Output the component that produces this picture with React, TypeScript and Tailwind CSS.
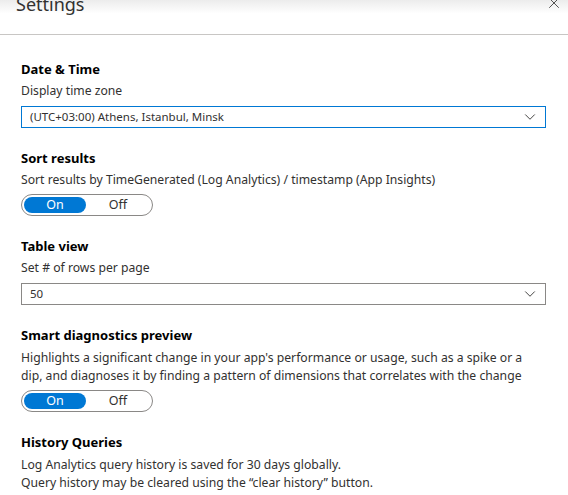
import { X, ChevronDown } from 'lucide-react'

function Toggle({ on = true }: { on?: boolean }) {
  return (
    <div className="mt-[5px] flex h-[22px] w-[132px] items-center rounded-full border border-[#8a8886] p-[2px] text-[12.5px]">
      <span
        className={
          on
            ? 'flex h-[16px] w-[62px] items-center justify-center rounded-full bg-[#0078d4] text-white'
            : 'flex h-[16px] w-[62px] items-center justify-center text-[#323130]'
        }
      >
        On
      </span>
      <span className="flex h-[16px] flex-1 items-center justify-center text-[#323130]">Off</span>
    </div>
  )
}

function Select({ value, focused }: { value: string; focused?: boolean }) {
  return (
    <div
      className={
        'mt-[6px] flex h-[22px] w-[525px] items-center justify-between border pl-[8px] pr-[6px] text-[11.5px] ' +
        (focused ? 'border-[#0078d4]' : 'border-[#8a8886]')
      }
    >
      <span>{value}</span>
      <ChevronDown className="h-[18px] w-[18px] text-[#323130]" strokeWidth={1.2} />
    </div>
  )
}

function Section({ title, children }: { title: string; children: React.ReactNode }) {
  return (
    <section className="flex flex-col">
      <h3 className="text-[13px] font-bold leading-[18px] text-[#000]">{title}</h3>
      {children}
    </section>
  )
}

export default function App() {
  return (
    <div
      className="relative h-[495px] w-[568px] overflow-hidden bg-white text-[#323130]"
      style={{ fontFamily: '"Noto Sans", "Open Sans", sans-serif' }}
    >
      {/* header */}
      <div className="flex h-[35px] items-start justify-between border-b border-[#c8c6c4] bg-gradient-to-b from-[#ececec] to-white to-[40%] pl-[16px] pr-[5px]">
        <h2 className="-mt-[8px] text-[18px] leading-[24px] text-[#323130]">Settings</h2>
        <button className="-mt-[6px] text-[#323130]" aria-label="Close">
          <X className="h-[18px] w-[18px]" strokeWidth={1.1} />
        </button>
      </div>

      <div className="flex flex-col gap-[21px] whitespace-nowrap px-[21px] pt-[25px] text-[12.2px] leading-[18px]">
        <Section title="Date & Time">
          <p className="mt-[4px]">Display time zone</p>
          <Select value="(UTC+03:00) Athens, Istanbul, Minsk" focused />
        </Section>

        <Section title="Sort results">
          <p className="mt-[4px]">Sort results by TimeGenerated (Log Analytics) / timestamp (App Insights)</p>
          <Toggle />
        </Section>

        <Section title="Table view">
          <p className="mt-[4px]">Set # of rows per page</p>
          <Select value="50" />
        </Section>

        <Section title="Smart diagnostics preview">
          <p className="mt-[5px]">
            Highlights a significant change in your app's performance or usage, such as a spike or a
            <br />
            dip, and diagnoses it by finding a pattern of dimensions that correlates with the change
          </p>
          <Toggle />
        </Section>

        <Section title="History Queries">
          <p className="mt-[5px] leading-[17.5px]">
            Log Analytics query history is saved for 30 days globally.
            <br />
            Query history may be cleared using the “clear history” button.
          </p>
        </Section>
      </div>
    </div>
  )
}
